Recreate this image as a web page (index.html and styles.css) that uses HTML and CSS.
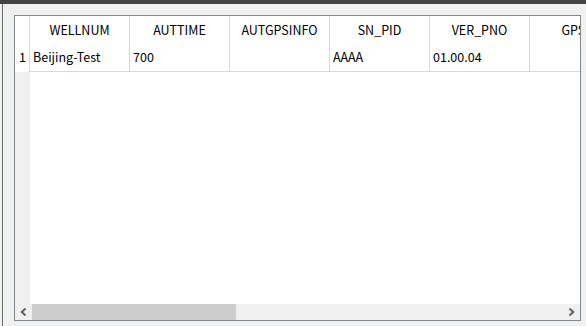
FILE: index.html
```html
<!DOCTYPE html>
<html lang="en">
<head>
    <meta charset="UTF-8">
    <title>Well Data</title>
    <link rel="stylesheet" href="styles.css">
</head>
<body>

<div class="topbar"></div>

<div class="frame">
    <div class="view">
        <div class="grid">
            <!-- Row numbers -->
            <div class="vhead">
                <div class="corner"></div>
                <div class="num">1</div>
            </div>

            <!-- Columns and data -->
            <div class="cells">
                <div class="hrow">
                    <div class="hcell">WELLNUM</div>
                    <div class="hcell">AUTTIME</div>
                    <div class="hcell">AUTGPSINFO</div>
                    <div class="hcell">SN_PID</div>
                    <div class="hcell">VER_PNO</div>
                    <div class="hcell">GPSID</div>
                </div>
                <div class="drow">
                    <div class="dcell">Beijing-Test</div>
                    <div class="dcell">700</div>
                    <div class="dcell"></div>
                    <div class="dcell">AAAA</div>
                    <div class="dcell">01.00.04</div>
                    <div class="dcell"></div>
                </div>
            </div>
        </div>

        <!-- Horizontal scrollbar -->
        <div class="hscroll">
            <div class="arrow">
                <svg width="7" height="8" viewBox="0 0 7 8"><polyline points="5.5,0.5 1.8,4 5.5,7.5" fill="none" stroke="#606060" stroke-width="2"/></svg>
            </div>
            <div class="track"><div class="thumb"></div></div>
            <div class="arrow">
                <svg width="7" height="8" viewBox="0 0 7 8"><polyline points="1.5,0.5 5.2,4 1.5,7.5" fill="none" stroke="#606060" stroke-width="2"/></svg>
            </div>
        </div>
    </div>
</div>

</body>
</html>
```

FILE: styles.css
```css
body {
    margin: 0;
    width: 586px;
    height: 326px;
    overflow: hidden;
    background-color: #f0f0f0;
    font-family: "Noto Sans CJK SC", "Noto Sans", sans-serif;
    font-size: 12.5px;
    color: #000;
}
.topbar {
    height: 4px;
    background-color: #444;
}
.frame {
    box-sizing: border-box;
    height: 322px;
    margin-left: 2px;
    border-left: 1px solid #6d6d6d;
    padding: 11px 5px 0 11px;
}
.view {
    height: 306px;
    box-sizing: border-box;
    border: 1px solid #828790;
    background: #fff;
    display: flex;
    flex-direction: column;
}
.grid {
    flex: 1;
    min-height: 0;
    display: flex;
    overflow: hidden;
}

/* Row number column */
.vhead {
    flex: none;
    width: 15px;
    background-color: #f0f0f0;
}
.corner, .num {
    box-sizing: border-box;
    height: 28px;
    background: #fff;
    border-right: 1px solid #d8d8d8;
}
.num {
    line-height: 26px;
    text-align: center;
    padding-left: 1px;
}

/* Cells */
.cells {
    flex: 1;
    min-width: 0;
    overflow: hidden;
}
.hrow, .drow {
    display: flex;
}
.hcell, .dcell {
    flex: none;
    box-sizing: border-box;
    width: 100px;
    height: 28px;
    border-right: 1px solid #d8d8d8;
    white-space: nowrap;
    overflow: hidden;
}
.hcell {
    text-align: center;
    line-height: 27px;
}
.dcell {
    padding-left: 3px;
    line-height: 26px;
    border-bottom: 1px solid #d8d8d8;
}

/* Scrollbar */
.hscroll {
    flex: none;
    height: 16px;
    display: flex;
    background-color: #f0f0f0;
}
.arrow {
    flex: none;
    width: 17px;
    display: flex;
    align-items: center;
    justify-content: center;
}
.track {
    flex: 1;
}
.thumb {
    width: 204px;
    height: 100%;
    background-color: #cdcdcd;
}
```
